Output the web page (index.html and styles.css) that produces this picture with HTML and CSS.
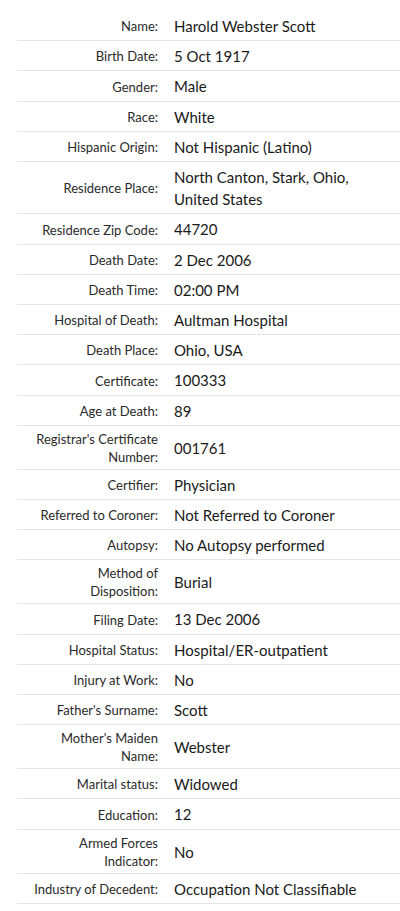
FILE: index.html
```html
<!DOCTYPE html>
<html lang="en">
<head>
<meta charset="utf-8">
<title>Record</title>
<link rel="stylesheet" href="styles.css">
</head>
<body>
<div class="page">
<table class="record">
<tbody>
<tr><th>Name:</th><td>Harold Webster Scott</td></tr>
<tr><th>Birth Date:</th><td>5 Oct 1917</td></tr>
<tr><th>Gender:</th><td>Male</td></tr>
<tr><th>Race:</th><td>White</td></tr>
<tr><th>Hispanic Origin:</th><td>Not Hispanic (Latino)</td></tr>
<tr><th>Residence Place:</th><td>North Canton, Stark, Ohio,<br>United States</td></tr>
<tr><th>Residence Zip Code:</th><td>44720</td></tr>
<tr><th>Death Date:</th><td>2 Dec 2006</td></tr>
<tr><th>Death Time:</th><td>02:00 PM</td></tr>
<tr><th>Hospital of Death:</th><td>Aultman Hospital</td></tr>
<tr><th>Death Place:</th><td>Ohio, USA</td></tr>
<tr><th>Certificate:</th><td>100333</td></tr>
<tr><th>Age at Death:</th><td>89</td></tr>
<tr><th>Registrar's Certificate Number:</th><td>001761</td></tr>
<tr><th>Certifier:</th><td>Physician</td></tr>
<tr><th>Referred to Coroner:</th><td>Not Referred to Coroner</td></tr>
<tr><th>Autopsy:</th><td>No Autopsy performed</td></tr>
<tr><th>Method of Disposition:</th><td>Burial</td></tr>
<tr><th>Filing Date:</th><td>13 Dec 2006</td></tr>
<tr><th>Hospital Status:</th><td>Hospital/ER-outpatient</td></tr>
<tr><th>Injury at Work:</th><td>No</td></tr>
<tr><th>Father's Surname:</th><td>Scott</td></tr>
<tr><th>Mother's Maiden Name:</th><td>Webster</td></tr>
<tr><th>Marital status:</th><td>Widowed</td></tr>
<tr><th>Education:</th><td>12</td></tr>
<tr><th>Armed Forces Indicator:</th><td>No</td></tr>
<tr><th>Industry of Decedent:</th><td>Occupation Not Classifiable</td></tr>
</tbody>
</table>
</div>
</body>
</html>
```

FILE: styles.css
```css
html, body {
  margin: 0;
  padding: 0;
  background: #ffffff;
}

.page {
  padding: 11px 0 0 17px;
  font-family: Lato, "Liberation Sans", sans-serif;
}

.record {
  width: 100%;
  border-collapse: collapse;
  border-spacing: 0;
}

.record tr {
  border-bottom: 1px solid #e6e6e6;
}

.record th {
  width: 128px;
  padding: 4px 8px 3px 13px;
  text-align: right;
  vertical-align: middle;
  font-weight: normal;
  font-size: 13px;
  line-height: 18px;
  color: #2a2a2a;
}

.record td {
  padding: 4px 8px 3px 8px;
  vertical-align: middle;
  font-size: 15px;
  line-height: 22.2px;
  color: #1a1a1a;
}
```
